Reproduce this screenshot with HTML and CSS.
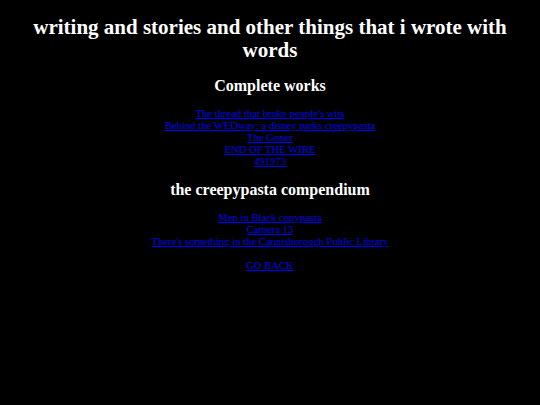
FILE: index.html
```html
<!DOCTYPE html>
<html>
<head>
<meta charset="utf-8">
<title>writing</title>
<link rel="stylesheet" href="styles.css">
</head>
<body class="page">
<div class="center">
<h1 class="title">writing and stories and other things that i wrote with words</h1>
<h2 class="section">Complete works</h2>
<div class="links">
<a href="#">The thread that broke people's wiis</a><br>
<a href="#">Behind the WEDway: a disney parks creepypasta</a><br>
<a href="#">The Goner</a><br>
<a href="#">END OF THE WIRE</a><br>
<a href="#">491973</a>
</div>
<h2 class="section">the creepypasta compendium</h2>
<div class="links">
<a href="#">Men in Black copypasta</a><br>
<a href="#">Camera 13</a><br>
<a href="#">There's something in the Cannisborough Public Library</a><br>
<br>
<a href="#">GO BACK</a>
</div>
</div>
</body>
</html>
```
FILE: styles.css
```css
html { background: #000; }
.page {
  margin: 0 8px;
  background: #000;
  color: #fff;
  font-family: "Liberation Serif", "Times New Roman", serif;
  font-size: 10.67px;
}
.center { text-align: center; }
.title {
  font-size: 21px;
  line-height: 23px;
  font-weight: bold;
  margin: 0;
  padding: 16px 0 15px;
}
.section {
  font-size: 16px;
  line-height: 18px;
  font-weight: bold;
  margin: 0;
}
.links {
  line-height: 12px;
  margin: 12px 0 14px;
}
.links a { color: #0000ee; text-decoration: underline; }
```
